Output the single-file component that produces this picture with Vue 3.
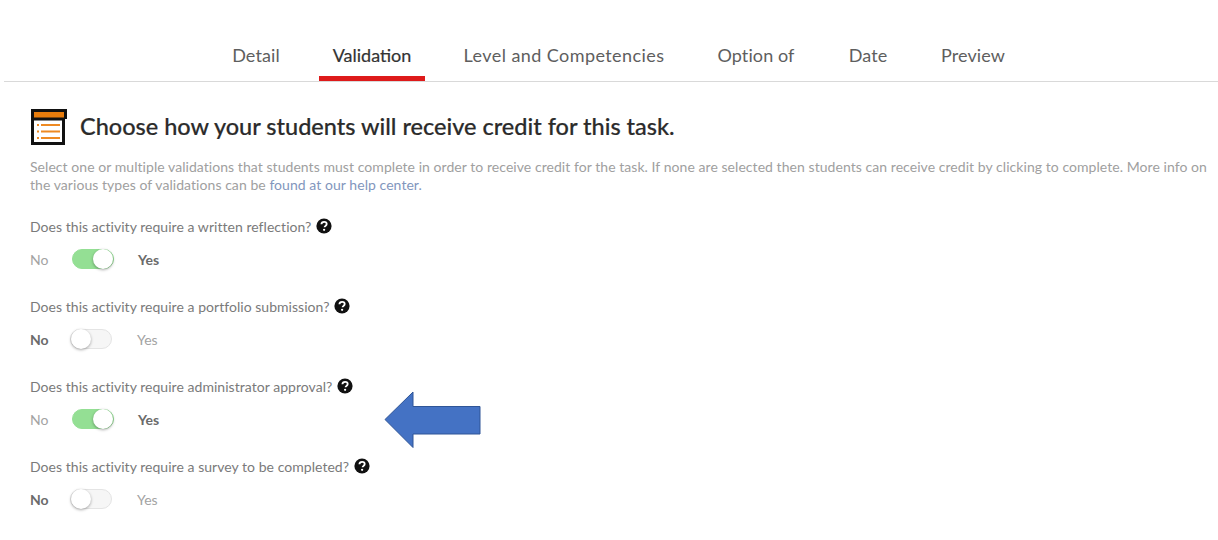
<template>
  <div class="page">
    <nav class="tabs">
      <a v-for="t in tabs" :key="t" class="tab" :class="{ active: t === 'Validation' }">{{ t }}</a>
    </nav>

    <section class="content">
      <header class="head">
        <svg class="head-icon" width="38" height="38" viewBox="0 0 38 38">
          <rect x="4" y="4" width="32" height="6" fill="#e87c0c" />
          <path d="M2.500 37V2.500H35.500V11M4 11H33.500V35.500H1" fill="none" stroke="#111" stroke-width="3" />
          <path d="M7 17h2M7 23.500h2M7 30h2M11 17h19M11 23.500h19M11 30h19" stroke="#ee8a22" stroke-width="2" fill="none" />
        </svg>
        <h1>Choose how your students will receive credit for this task.</h1>
      </header>

      <p class="intro">
        Select one or multiple validations that students must complete in order to receive credit for the task. If none are selected then students can receive credit by clicking to complete. More info on the various types of validations can be <a class="link">found at our help center.</a>
      </p>

      <div v-for="q in questions" :key="q.text" class="question">
        <div class="q-label">
          <span>{{ q.text }}</span>
          <svg class="help" width="16" height="16" viewBox="0 0 16 16">
            <circle cx="8" cy="8" r="7.600" fill="#111" />
            <path d="M5.400 6.200C5.500 4.600 6.600 3.800 8.100 3.800c1.500 0 2.600.9 2.600 2.200 0 1-.6 1.500-1.300 2-.6.4-.8.7-.8 1.300" fill="none" stroke="#fff" stroke-width="1.800" />
            <circle cx="8.100" cy="11.800" r="1.150" fill="#fff" />
          </svg>
        </div>
        <div class="q-toggle" :class="{ yes: q.value }">
          <span class="opt" :class="{ on: !q.value }">No</span>
          <span class="switch" :class="{ checked: q.value }"><span class="knob"></span></span>
          <span class="opt" :class="{ on: q.value }">Yes</span>
        </div>
      </div>
    </section>

    <svg class="arrow" width="98" height="58" viewBox="0 0 98 58">
      <path d="M1 28.500L29 1V15.500H96V43H29V56.500Z" fill="#4472c4" stroke="#2f5597" stroke-width="1" />
    </svg>
  </div>
</template>

<script setup>
const tabs = ['Detail', 'Validation', 'Level and Competencies', 'Option of', 'Date', 'Preview']

const questions = [
  { text: 'Does this activity require a written reflection?', value: true },
  { text: 'Does this activity require a portfolio submission?', value: false },
  { text: 'Does this activity require administrator approval?', value: true },
  { text: 'Does this activity require a survey to be completed?', value: false },
]
</script>

<style>
html,
body {
  margin: 0;
  background: #fff;
}
</style>

<style scoped>
.page {
  position: relative;
  width: 1218px;
  height: 540px;
  overflow: hidden;
  background: #fff;
  font-family: Lato, "Open Sans", sans-serif;
  color: #7b7b7b;
}

.tabs {
  display: grid;
  grid-template-columns: 76px 106px 228px 106px 68px 92px;
  gap: 25px;
  height: 82px;
  box-sizing: border-box;
  margin-left: 4px;
  padding: 37px 0 0 214px;
  border-bottom: 1px solid #d9d9d9;
}
.tab {
  height: 44px;
  box-sizing: border-box;
  font-size: 18px;
  line-height: 37px;
  letter-spacing: 0.1px;
  text-align: center;
  color: #5e5e5e;
  white-space: nowrap;
}
.tab:nth-child(3) {
  letter-spacing: 0.42px;
}
.tab.active {
  color: #333;
  letter-spacing: 0;
  border-bottom: 5px solid #de1a1a;
  -webkit-text-stroke: 0.2px #333;
}

.content {
  padding: 26px 0 0 30px;
}
.head {
  display: flex;
  align-items: center;
  gap: 12px;
  height: 38px;
}
.head h1 {
  margin: 0 0 2px;
  font-size: 23.500px;
  font-weight: 500;
  color: #2b2b2b;
  white-space: nowrap;
  -webkit-text-stroke: 0.2px #2b2b2b;
}
.intro {
  width: 1182px;
  margin: 12px 0 22px;
  font-size: 14px;
  line-height: 18px;
  letter-spacing: 0.055px;
  color: #a0a0a0;
}
.link {
  color: #8296bd;
}

.question {
  height: 80px;
}
.q-label {
  display: flex;
  align-items: center;
  gap: 5px;
  height: 20px;
  font-size: 14px;
  letter-spacing: 0.04px;
  color: #7a7a7a;
}
.q-toggle {
  display: flex;
  align-items: center;
  margin-top: 11px;
  height: 24px;
  font-size: 14px;
}
.opt {
  width: 40px;
  color: #a3a3a3;
}
.yes .opt:first-child {
  width: 42px;
}
.opt.on {
  font-weight: 700;
  color: #6b6b6b;
}
.switch {
  position: relative;
  width: 42px;
  height: 20px;
  margin-right: 25px;
  border-radius: 10px;
  background: #f6f6f6;
  border: 1px solid #e4e4e4;
  box-sizing: border-box;
}
.switch.checked {
  margin-right: 24px;
  background: #94df94;
  border-color: #94df94;
}
.knob {
  position: absolute;
  top: -1px;
  left: 0;
  width: 20px;
  height: 20px;
  border-radius: 50%;
  background: #fff;
  box-shadow: 0 1px 3px rgba(0, 0, 0, 0.35);
}
.switch.checked .knob {
  left: auto;
  right: 0;
}

.arrow {
  position: absolute;
  left: 384px;
  top: 391px;
}
</style>
